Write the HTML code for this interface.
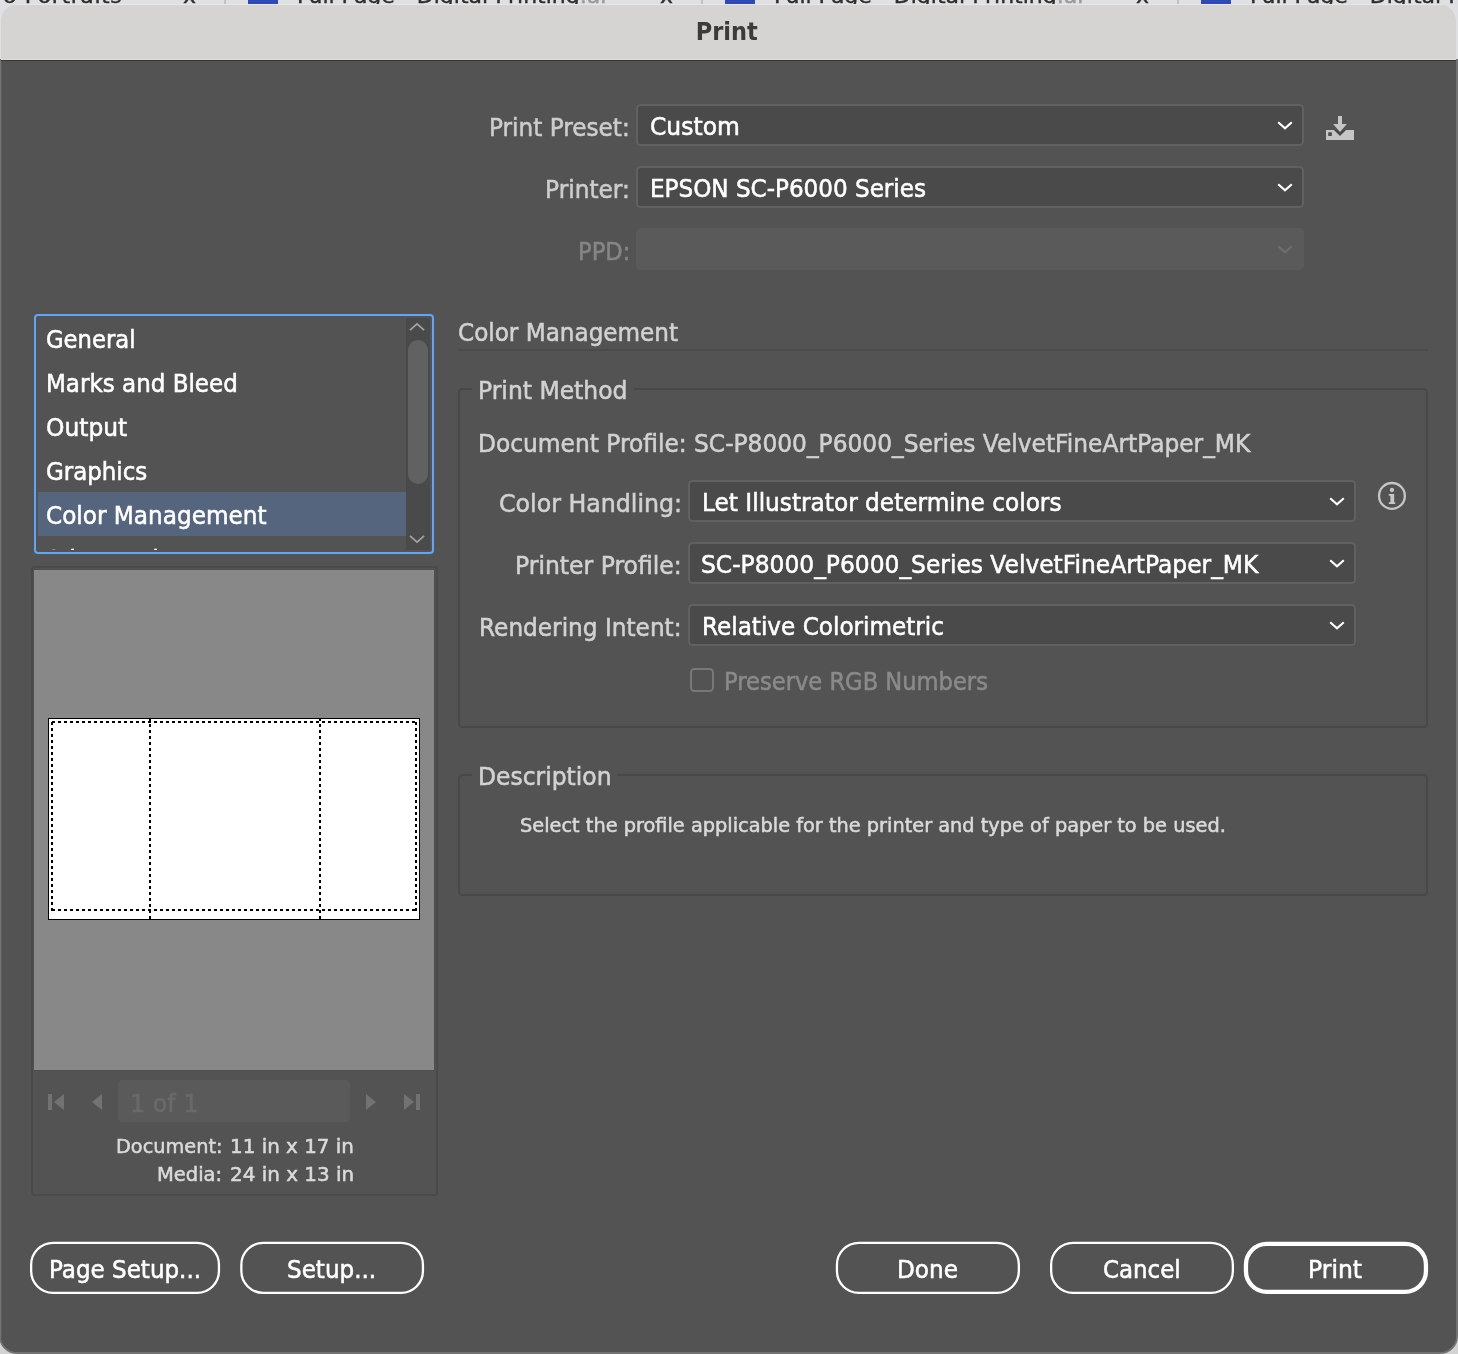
<!DOCTYPE html>
<html lang="en"><head><meta charset="utf-8"><title>Print</title>
<style>
html,body{margin:0;padding:0}
body{width:1458px;height:1354px;position:relative;overflow:hidden;background:#d3d3d3;font-family:"DejaVu Sans","Liberation Sans",sans-serif}
.abs,.t{position:absolute}
.reset{margin:0;padding:0;list-style:none;position:static}
.t{margin:0;padding:0;border:0;background:none;display:block;font-weight:normal;text-align:left;letter-spacing:0}
.t{white-space:nowrap;line-height:1;transform-origin:0 0;-webkit-text-stroke:0.55px currentColor;font-family:"DejaVu Sans","Liberation Sans",sans-serif}
#strip{position:absolute;left:0;top:0;width:1458px;height:61px;background:#dee0e4;overflow:hidden}
#strip>*{will-change:transform}
#strip .tt{position:absolute;top:-14.7px;font-size:22px;-webkit-text-stroke:0.4px currentColor;line-height:1;color:#2e2e2e;white-space:nowrap}
#dlg{position:absolute;left:1px;top:4px;width:1455px;height:1348px;background:linear-gradient(#d5d4d2 0,#d5d4d2 50px,#535353 50px,#535353 100%);border-radius:18px 18px 16px 16px;overflow:hidden}
#ring{position:absolute;left:1px;top:61px;width:1455px;height:1291px;background:#535353;border-radius:0 0 16px 16px;box-shadow:0 0 0 2px #727272}
#in{position:absolute;left:-1px;top:-4px;width:1458px;height:1354px;will-change:transform}
#titlebar{position:absolute;left:0;top:4px;width:1458px;height:55px;background:#d5d4d2;border-top:1px solid #e6e6e5;box-sizing:border-box}
.dd{position:absolute;box-sizing:border-box;background:#4a4a4a;border:2px solid #616161;border-radius:4.5px}
.fs{position:absolute;box-sizing:border-box;border:2px solid #484848;border-radius:4.5px}
svg{position:absolute;overflow:visible}
</style></head><body>
<div id="strip">
<span class="tt" style="left:-26.5px;letter-spacing:.6px">Two Portraits</span>
<span class="tt" style="left:183px">x</span><span class="abs" style="left:224px;top:0;width:2px;height:4px;background:#c2c2c2"></span><span class="abs" style="left:248px;top:0;width:30px;height:4px;background:#2f49b5"></span>
<span class="tt" style="left:297px">Full Page - Digital Printing<span style="color:#999">.ai</span></span>
<span class="tt" style="left:659.5px">x</span><span class="abs" style="left:700.5px;top:0;width:2px;height:4px;background:#c2c2c2"></span><span class="abs" style="left:724.5px;top:0;width:30px;height:4px;background:#2f49b5"></span>
<span class="tt" style="left:773.5px">Full Page - Digital Printing<span style="color:#999">.ai</span></span>
<span class="tt" style="left:1136px">x</span><span class="abs" style="left:1177px;top:0;width:2px;height:4px;background:#c2c2c2"></span><span class="abs" style="left:1201px;top:0;width:30px;height:4px;background:#2f49b5"></span>
<span class="tt" style="left:1250px">Full Page - Digital Printing<span style="color:#999">.ai</span></span>
</div>
<div id="ring"></div>
<div id="dlg"><div id="in">
<div id="titlebar"></div>
<div class="abs" style="left:0;top:59px;width:1458px;height:1px;background:#dfdedc"></div>
<div class="abs" style="left:0;top:60px;width:1458px;height:1px;background:#343434"></div>
<div class="abs" style="left:1px;top:61px;width:1px;height:1293px;background:#5f5f5f"></div>


<div class="dd" style="left:636px;top:104px;width:668px;height:42px"></div>
<svg style="left:1277px;top:120.7px" width="16" height="9" viewBox="0 0 16 9"><path d="M1.2 1.2 L8 7.4 L14.8 1.2" fill="none" stroke="#fff" stroke-width="2.1" stroke-linejoin="miter"/></svg>
<div class="dd" style="left:636px;top:166px;width:668px;height:42px"></div>
<svg style="left:1277px;top:182.7px" width="16" height="9" viewBox="0 0 16 9"><path d="M1.2 1.2 L8 7.4 L14.8 1.2" fill="none" stroke="#fff" stroke-width="2.1" stroke-linejoin="miter"/></svg>
<div class="abs" style="left:636px;top:228px;width:668px;height:42px;background:#5a5a5a;border-radius:5px"></div>
<svg style="left:1277px;top:244.7px" width="16" height="9" viewBox="0 0 16 9"><path d="M1.2 1.2 L8 7.4 L14.8 1.2" fill="none" stroke="#6e6e6e" stroke-width="2.1" stroke-linejoin="miter"/></svg>
<svg style="left:1326px;top:116px" width="28" height="24" viewBox="0 0 28 24">
<path d="M0 14 H28 V24 H0 Z" fill="#c5c5c5"/>
<path d="M7.9 14 H20.1 L14 20.1 Z" fill="#494949"/>
<path d="M12 0 H16 V8 H20.9 L14 15.9 L7.1 8 H12 Z" fill="#c5c5c5"/>
<rect x="2.2" y="16.3" width="3.7" height="3.6" rx="0.5" fill="#4f4f4f"/>
</svg>
<div class="abs" style="left:34px;top:314px;width:400px;height:240px;box-sizing:border-box;border:2px solid #60a5fb;border-radius:4px"></div>
<div class="abs" style="left:38px;top:318px;width:392px;height:232.3px;overflow:hidden">
<div class="abs" style="left:0;top:174px;width:368px;height:44px;background:#55657d"></div>
<div class="abs" style="left:368px;top:0;width:24px;height:232px;background:#4a4a4a"></div>
<div class="abs" style="left:370px;top:22px;width:20px;height:144px;border-radius:10px;background:#616161"></div>
<svg style="left:0;top:0" width="392" height="232" viewBox="0 0 392 232"><path d="M372 12.2 L379.05 5.9 L386.1 12.2 M372 217.8 L379.05 224.1 L386.1 217.8" fill="none" stroke="#a3a3a3" stroke-width="1.75"/></svg>
<span class="t" style="left:7.6px;top:230.4px;font-size:24px;color:#fff;transform:scaleX(.95)">Advanced</span>
</div>
<div class="abs" style="left:30.6px;top:566px;width:407.5px;height:630px;box-sizing:border-box;border:2px solid #4a4a4a;border-radius:4px"></div>
<div class="abs" style="left:33px;top:569px;width:402px;height:502px;background:#4f4f4f"></div>
<div class="abs" style="left:34px;top:570px;width:400px;height:500px;background:#888888"></div>
<svg style="left:48px;top:718px" width="372" height="202" viewBox="0 0 372 202" shape-rendering="crispEdges">
<rect x="0.5" y="0.5" width="371" height="201" fill="#fff" stroke="#000" stroke-width="1"/>
<g stroke="#000" stroke-width="2" stroke-dasharray="3 3" fill="none">
<line x1="4" y1="4" x2="369" y2="4"/><line x1="4" y1="192" x2="369" y2="192"/>
<line x1="4" y1="4" x2="4" y2="193"/><line x1="368" y1="4" x2="368" y2="193"/>
<line x1="102" y1="0" x2="102" y2="202"/><line x1="272" y1="0" x2="272" y2="202"/>
</g>
</svg>
<div class="abs" style="left:118px;top:1080px;width:232px;height:42px;background:#5a5a5a;border-radius:4.5px"></div>
<svg style="left:48px;top:1094px" width="16" height="16" viewBox="0 0 16 16"><rect x="0" y="0" width="4" height="16" fill="#727272"/><path d="M16 0 V16 L6 8 Z" fill="#727272"/></svg>
<svg style="left:92px;top:1094px" width="10" height="16" viewBox="0 0 10 16"><path d="M10 0 V16 L0 8 Z" fill="#727272"/></svg>
<svg style="left:366px;top:1094px" width="10" height="16" viewBox="0 0 10 16"><path d="M0 0 V16 L10 8 Z" fill="#727272"/></svg>
<svg style="left:404px;top:1094px" width="16" height="16" viewBox="0 0 16 16"><rect x="12" y="0" width="4" height="16" fill="#727272"/><path d="M0 0 V16 L10 8 Z" fill="#727272"/></svg>

<div class="abs" style="left:458px;top:349px;width:970px;height:2px;background:#4b4b4b"></div>
<div class="fs" style="left:458px;top:388px;width:970px;height:340px"></div>
<div class="abs" style="left:471.8px;top:387px;width:162.5px;height:4px;background:#535353"></div>
<div class="fs" style="left:458px;top:774px;width:970px;height:122px"></div>
<div class="abs" style="left:472px;top:773px;width:146.3px;height:4px;background:#535353"></div>

<div class="dd" style="left:688px;top:480px;width:668px;height:42px"></div>
<svg style="left:1329px;top:496.7px" width="16" height="9" viewBox="0 0 16 9"><path d="M1.2 1.2 L8 7.4 L14.8 1.2" fill="none" stroke="#fff" stroke-width="2.1" stroke-linejoin="miter"/></svg>
<div class="dd" style="left:688px;top:542px;width:668px;height:42px"></div>
<svg style="left:1329px;top:558.7px" width="16" height="9" viewBox="0 0 16 9"><path d="M1.2 1.2 L8 7.4 L14.8 1.2" fill="none" stroke="#fff" stroke-width="2.1" stroke-linejoin="miter"/></svg>
<div class="dd" style="left:688px;top:604px;width:668px;height:42px"></div>
<svg style="left:1329px;top:620.7px" width="16" height="9" viewBox="0 0 16 9"><path d="M1.2 1.2 L8 7.4 L14.8 1.2" fill="none" stroke="#fff" stroke-width="2.1" stroke-linejoin="miter"/></svg>
<div class="abs" style="left:690px;top:668px;width:24px;height:24px;box-sizing:border-box;border:2px solid #787878;border-radius:4.5px"></div>
<svg style="left:1377px;top:481px" width="30" height="30" viewBox="0 0 30 30">
<circle cx="14.95" cy="14.9" r="12.9" fill="none" stroke="#c6c6c6" stroke-width="2.3"/>
<circle cx="14.95" cy="9" r="2.15" fill="#c6c6c6"/>
<path d="M11.8 13.1 H17.2 V21.3 H18.2 V22.9 H11.8 V21.3 H13.4 V14.7 H11.8 Z" fill="#c6c6c6"/>
</svg>

<svg style="left:0;top:1236px" width="1458" height="64" viewBox="0 1236 1458 64">
<rect x="31.15" y="1242.85" width="187.80" height="50.00" rx="21.85" fill="none" stroke="#fff" stroke-width="2.3"/>
<rect x="241.35" y="1242.85" width="181.60" height="50.00" rx="21.85" fill="none" stroke="#fff" stroke-width="2.3"/>
<rect x="836.95" y="1242.85" width="181.90" height="50.00" rx="21.85" fill="none" stroke="#fff" stroke-width="2.3"/>
<rect x="1051.15" y="1242.85" width="181.70" height="50.00" rx="21.85" fill="none" stroke="#fff" stroke-width="2.3"/>
<rect x="1245.95" y="1243.85" width="180.00" height="48.00" rx="20.85" fill="none" stroke="#fff" stroke-width="4.3"/>
</svg>
<h1 class="t" style="left:695.70px;top:18.80px;font-size:25px;font-weight:bold;font-family:'DejaVu Sans Condensed','DejaVu Sans',sans-serif;font-stretch:condensed;-webkit-text-stroke:0;color:#3b3b3b;transform:scaleX(1.0000)">Print</h1>
<label class="t" style="left:489.27px;top:115.93px;font-size:24px;font-weight:normal;color:#cdcdcd;transform:scaleX(0.9657)">Print Preset:</label>
<label class="t" style="left:545.16px;top:177.93px;font-size:24px;font-weight:normal;color:#cdcdcd;transform:scaleX(0.9699)">Printer:</label>
<label class="t" style="left:577.51px;top:239.93px;font-size:24px;font-weight:normal;color:#858585;transform:scaleX(0.9451)">PPD:</label>
<span class="t" style="left:649.92px;top:114.83px;font-size:24px;font-weight:normal;color:#ffffff;transform:scaleX(0.9770)">Custom</span>
<span class="t" style="left:649.78px;top:176.73px;font-size:24px;font-weight:normal;color:#ffffff;transform:scaleX(0.9616)">EPSON SC-P6000 Series</span>
<ul class="reset" role="listbox">
<li class="t" style="left:45.65px;top:327.73px;font-size:24px;font-weight:normal;color:#ffffff;transform:scaleX(0.9471)">General</li>
<li class="t" style="left:45.58px;top:371.73px;font-size:24px;font-weight:normal;color:#ffffff;transform:scaleX(0.9587)">Marks and Bleed</li>
<li class="t" style="left:45.93px;top:415.73px;font-size:24px;font-weight:normal;color:#ffffff;transform:scaleX(0.9744)">Output</li>
<li class="t" style="left:45.94px;top:459.73px;font-size:24px;font-weight:normal;color:#ffffff;transform:scaleX(0.9558)">Graphics</li>
<li class="t" style="left:45.93px;top:503.73px;font-size:24px;font-weight:normal;color:#ffffff;transform:scaleX(0.9656)">Color Management</li>
</ul>
<h2 class="t" style="left:457.84px;top:320.73px;font-size:24px;font-weight:normal;color:#d2d2d2;transform:scaleX(0.9634)">Color Management</h2>
<h3 class="t" style="left:477.95px;top:378.83px;font-size:24px;font-weight:normal;color:#d2d2d2;transform:scaleX(0.9772)">Print Method</h3>
<span class="t" style="left:477.81px;top:431.83px;font-size:24px;font-weight:normal;color:#d2d2d2;transform:scaleX(0.9718)">Document Profile: SC-P8000_P6000_Series VelvetFineArtPaper_MK</span>
<label class="t" style="left:498.91px;top:491.73px;font-size:24px;font-weight:normal;color:#d2d2d2;transform:scaleX(0.9876)">Color Handling:</label>
<label class="t" style="left:515.04px;top:553.73px;font-size:24px;font-weight:normal;color:#d2d2d2;transform:scaleX(0.9798)">Printer Profile:</label>
<label class="t" style="left:479.36px;top:615.73px;font-size:24px;font-weight:normal;color:#d2d2d2;transform:scaleX(0.9675)">Rendering Intent:</label>
<span class="t" style="left:701.76px;top:490.93px;font-size:24px;font-weight:normal;color:#ffffff;transform:scaleX(0.9682)">Let Illustrator determine colors</span>
<span class="t" style="left:701.38px;top:552.93px;font-size:24px;font-weight:normal;color:#ffffff;transform:scaleX(0.9737)">SC-P8000_P6000_Series VelvetFineArtPaper_MK</span>
<span class="t" style="left:701.77px;top:614.93px;font-size:24px;font-weight:normal;color:#ffffff;transform:scaleX(0.9639)">Relative Colorimetric</span>
<span class="t" style="left:724.02px;top:669.83px;font-size:24px;font-weight:normal;color:#8a8a8a;transform:scaleX(0.9421)">Preserve RGB Numbers</span>
<h3 class="t" style="left:477.95px;top:765.03px;font-size:24px;font-weight:normal;color:#d2d2d2;transform:scaleX(0.9767)">Description</h3>
<p class="t" style="left:519.73px;top:814.73px;font-size:20px;font-weight:normal;color:#dadada;transform:scaleX(0.9668)">Select the profile applicable for the printer and type of paper to be used.</p>
<span class="t" style="left:130.47px;top:1091.83px;font-size:24px;font-weight:normal;color:#6a6a6a;transform:scaleX(0.9915)">1 of 1</span>
<span class="t" style="left:115.61px;top:1135.83px;font-size:20px;font-weight:normal;color:#dadada;transform:scaleX(0.9653)">Document:</span>
<span class="t" style="left:230.21px;top:1135.83px;font-size:20px;font-weight:normal;color:#dadada;transform:scaleX(0.9946)">11 in x 17 in</span>
<span class="t" style="left:157.49px;top:1163.63px;font-size:20px;font-weight:normal;color:#dadada;transform:scaleX(0.9746)">Media:</span>
<span class="t" style="left:230.06px;top:1163.63px;font-size:20px;font-weight:normal;color:#dadada;transform:scaleX(0.9959)">24 in x 13 in</span>
<div class="reset" role="group">
<button class="t" style="left:49.08px;top:1257.73px;font-size:24px;font-weight:normal;color:#ffffff;transform:scaleX(0.9595)">Page Setup...</button>
<button class="t" style="left:287.20px;top:1257.73px;font-size:24px;font-weight:normal;color:#ffffff;transform:scaleX(0.9613)">Setup...</button>
<button class="t" style="left:897.07px;top:1257.73px;font-size:24px;font-weight:normal;color:#ffffff;transform:scaleX(0.9660)">Done</button>
<button class="t" style="left:1103.34px;top:1257.73px;font-size:24px;font-weight:normal;color:#ffffff;transform:scaleX(0.9559)">Cancel</button>
<button class="t" style="left:1308.25px;top:1257.73px;font-size:24px;font-weight:normal;color:#ffffff;transform:scaleX(0.9774)">Print</button>
</div>
</div></div></body></html>
